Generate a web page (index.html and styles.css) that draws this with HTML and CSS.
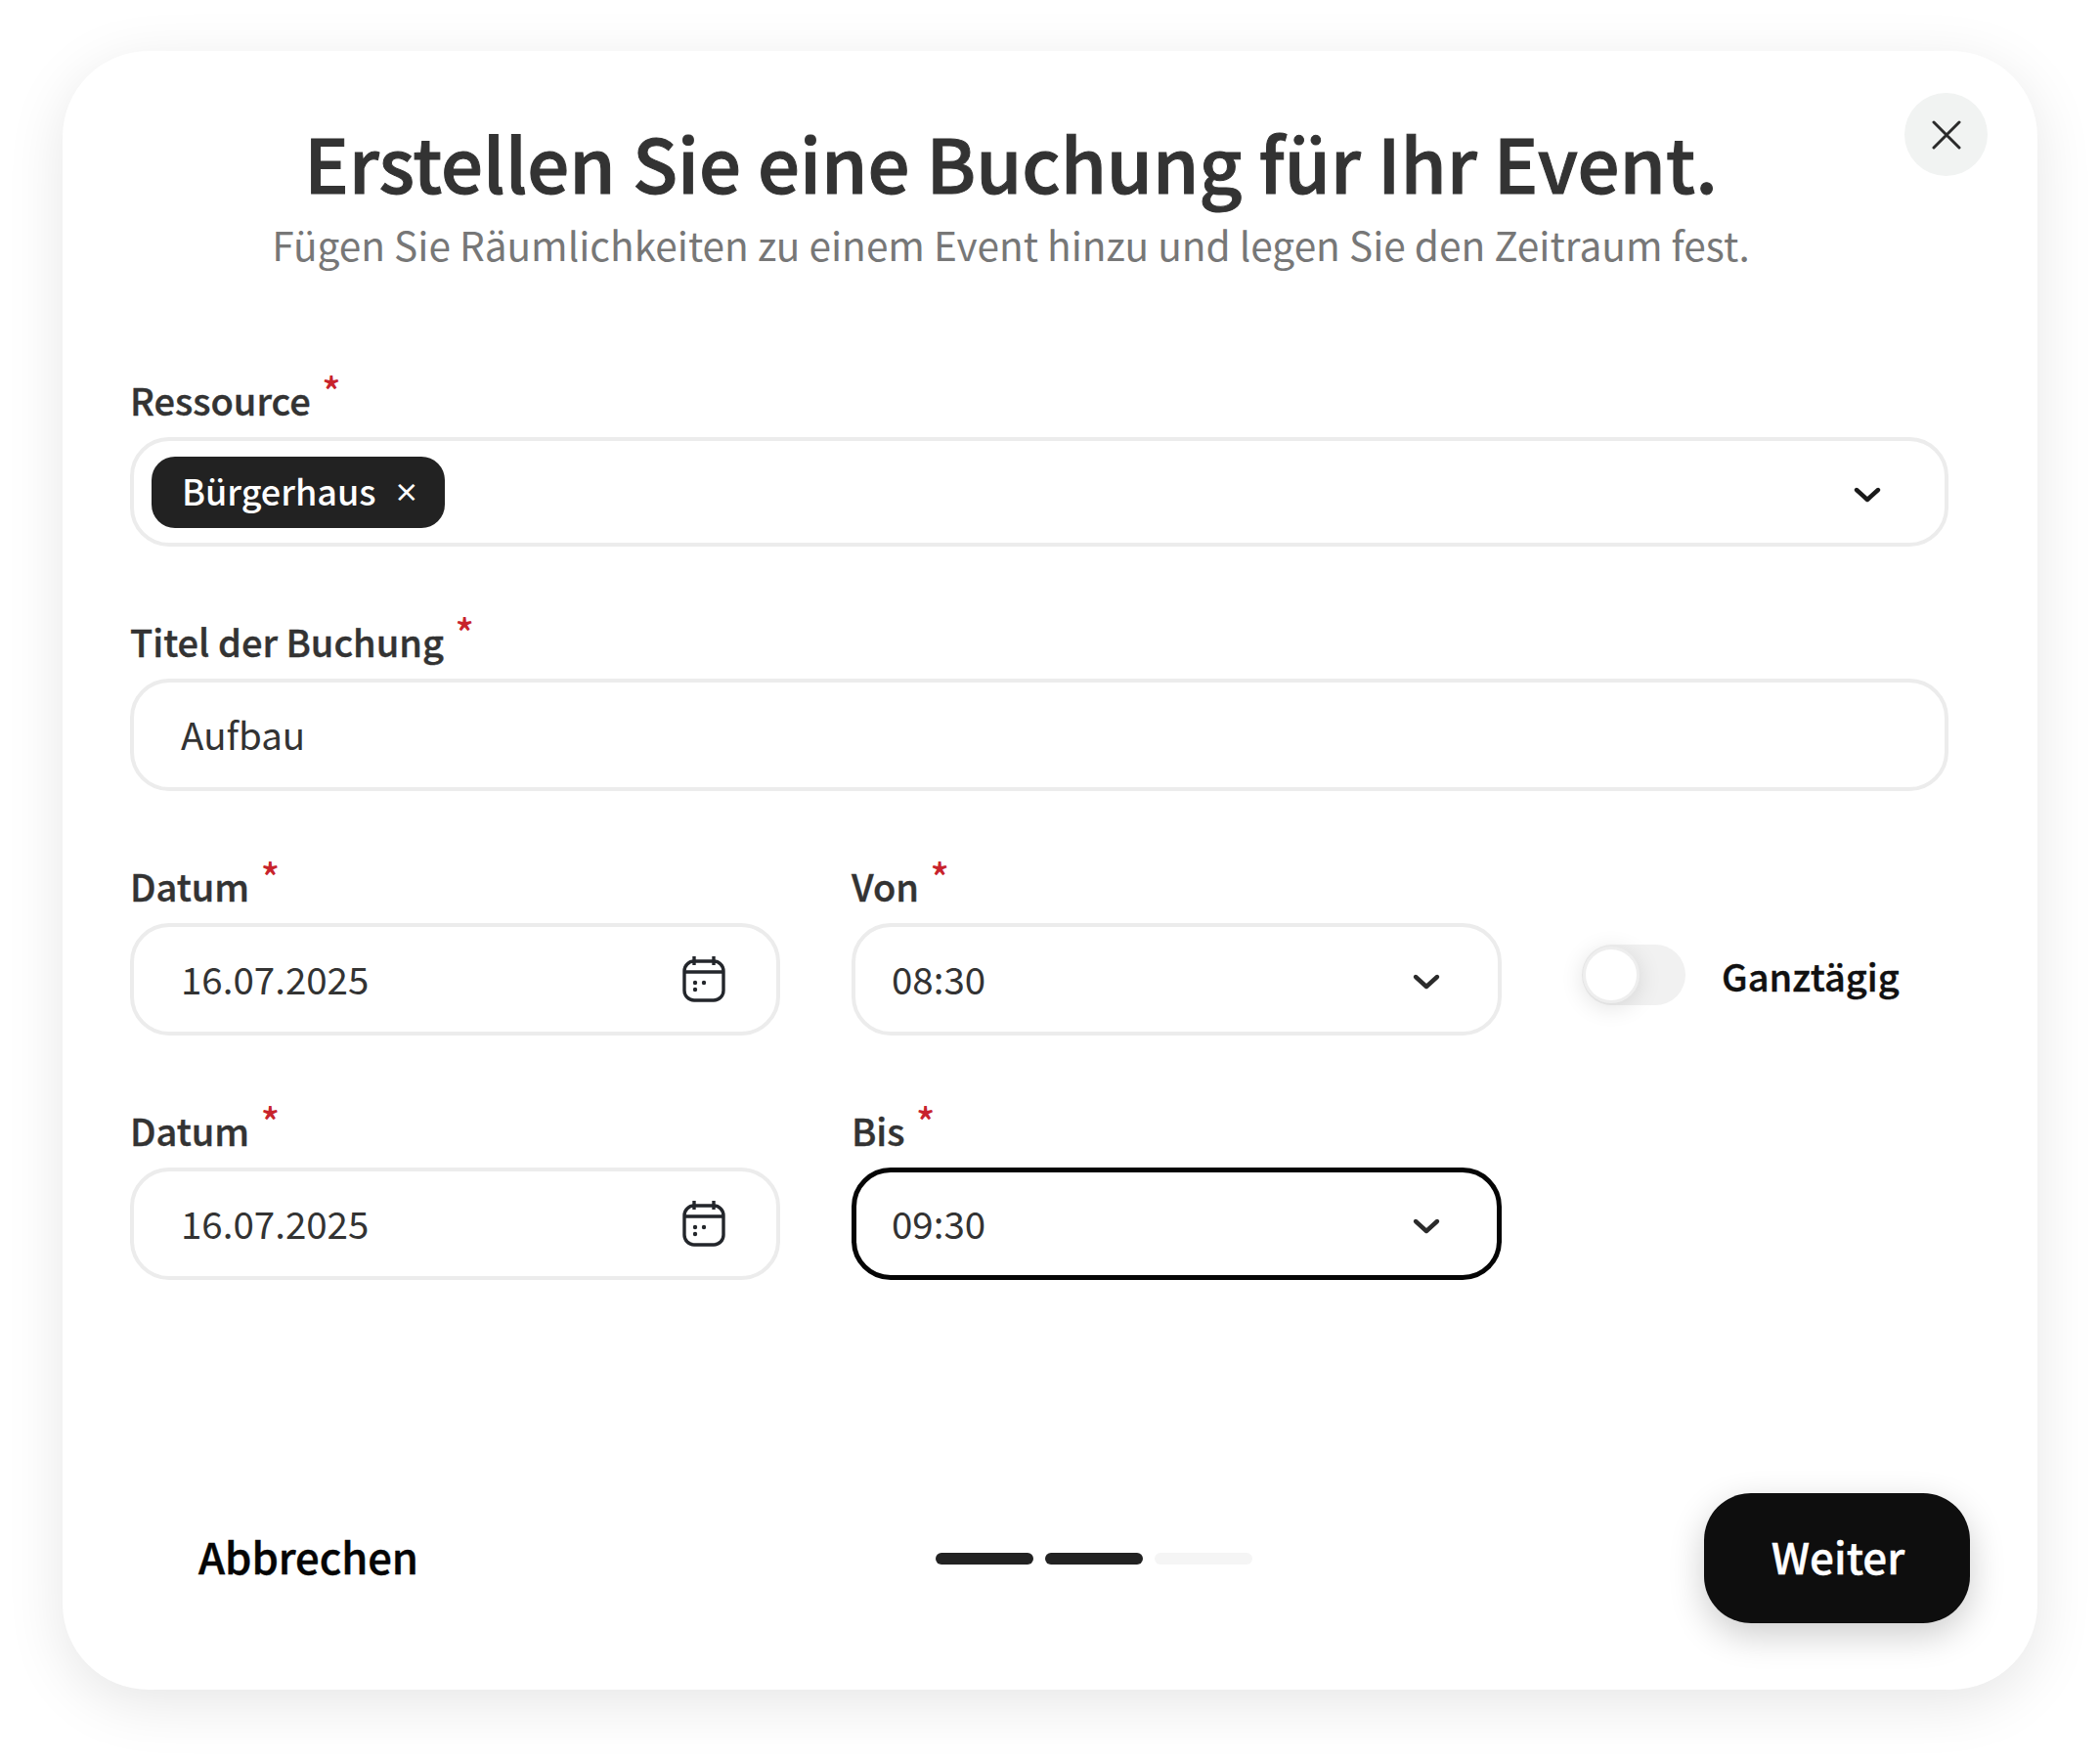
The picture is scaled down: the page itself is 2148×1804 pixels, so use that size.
FILE: index.html
```html
<!DOCTYPE html>
<html lang="de">
<head>
<meta charset="utf-8">
<title>Buchung erstellen</title>
<link rel="stylesheet" href="styles.css">
</head>
<body>
<main class="card">
  <button class="close" aria-label="Schließen">
    <svg width="30" height="30" viewBox="0 0 30 30" fill="none" stroke="#2b2b2b" stroke-width="3" stroke-linecap="round"><path d="M2 2 28 28M28 2 2 28"/></svg>
  </button>
  <header class="head">
    <h1 class="title">Erstellen Sie eine Buchung für Ihr Event.</h1>
    <p class="sub">Fügen Sie Räumlichkeiten zu einem Event hinzu und legen Sie den Zeitraum fest.</p>
  </header>
  <form class="form">
    <div class="field">
      <div class="label">Ressource <span class="req">*</span></div>
      <div class="control control-res">
        <span class="chip">Bürgerhaus<span class="chip-x">×</span></span>
        <svg class="chev" width="30" height="18" viewBox="0 0 30 18" fill="none" stroke="#1a1a1a" stroke-width="4.4" stroke-linecap="round" stroke-linejoin="round"><path d="M4 4 15 14 26 4"/></svg>
      </div>
    </div>
    <div class="field">
      <div class="label">Titel der Buchung <span class="req">*</span></div>
      <div class="control"><span class="value">Aufbau</span></div>
    </div>
    <div class="grid">
      <div class="field">
        <div class="label">Datum <span class="req">*</span></div>
        <div class="control control-date"><span class="value">16.07.2025</span>
          <svg class="cal" width="44" height="48" viewBox="0 0 44 48" fill="none" stroke="#23262b" stroke-width="3.4"><rect x="2" y="6" width="40" height="40" rx="10"/><path d="M2 17H42M12 1V10M32 1V10"/><g fill="#23262b" stroke="none"><circle cx="13" cy="28" r="2.2"/><circle cx="22" cy="28" r="2.2"/><circle cx="13" cy="35" r="2.2"/></g></svg>
        </div>
      </div>
      <div class="field">
        <div class="label">Von <span class="req">*</span></div>
        <div class="control control-time"><span class="value">08:30</span>
          <svg class="chev" width="30" height="18" viewBox="0 0 30 18" fill="none" stroke="#2b2b2b" stroke-width="4.4" stroke-linecap="round" stroke-linejoin="round"><path d="M4 4 15 14 26 4"/></svg>
        </div>
      </div>
      <div class="all-day">
        <span class="toggle"><span class="knob"></span></span>
        <span class="all-day-label">Ganztägig</span>
      </div>
      <div class="field">
        <div class="label">Datum <span class="req">*</span></div>
        <div class="control control-date"><span class="value">16.07.2025</span>
          <svg class="cal" width="44" height="48" viewBox="0 0 44 48" fill="none" stroke="#23262b" stroke-width="3.4"><rect x="2" y="6" width="40" height="40" rx="10"/><path d="M2 17H42M12 1V10M32 1V10"/><g fill="#23262b" stroke="none"><circle cx="13" cy="28" r="2.2"/><circle cx="22" cy="28" r="2.2"/><circle cx="13" cy="35" r="2.2"/></g></svg>
        </div>
      </div>
      <div class="field">
        <div class="label">Bis <span class="req">*</span></div>
        <div class="control control-time control-focus"><span class="value">09:30</span>
          <svg class="chev" width="30" height="18" viewBox="0 0 30 18" fill="none" stroke="#2b2b2b" stroke-width="4.4" stroke-linecap="round" stroke-linejoin="round"><path d="M4 4 15 14 26 4"/></svg>
        </div>
      </div>
    </div>
  </form>
  <footer class="foot">
    <button class="cancel">Abbrechen</button>
    <div class="steps"><span class="step step-on"></span><span class="step step-on"></span><span class="step"></span></div>
    <button class="next">Weiter</button>
  </footer>
</main>
</body>
</html>
```
FILE: styles.css
```css
* { box-sizing: border-box; }
html, body { margin: 0; background: #fff; }
body {
  width: 2148px;
  height: 1804px;
  padding: 52px 64px 0;
  font-family: "Noto Sans CJK SC", "Noto Sans", sans-serif;
  overflow: hidden;
}
.card {
  position: relative;
  width: 2020px;
  height: 1676px;
  padding: 63px 91px 0 69px;
  background: #fff;
  border-radius: 88px;
  box-shadow: 0 14px 60px rgba(0, 0, 0, .10);
  display: flex;
  flex-direction: column;
}
.close {
  position: absolute;
  top: 43px;
  right: 51px;
  width: 85px;
  height: 85px;
  border: 0;
  padding: 0;
  border-radius: 50%;
  background: #f1f3f2;
  display: flex;
  align-items: center;
  justify-content: center;
}
.head { padding-right: 58px; text-align: center; }
.title {
  margin: 0;
  font-size: 76px;
  line-height: 100px;
  font-weight: 500;
  -webkit-text-stroke: 1px #333;
  color: #333;
}
.sub {
  margin: 4px 0 0;
  font-size: 40.6px;
  line-height: 62px;
  font-weight: 400;
  color: #777;
}
.form { display: flex; flex-direction: column; gap: 67px; margin-top: 98px; }
.field { display: flex; flex-direction: column; gap: 8px; }
.label {
  font-size: 38px;
  line-height: 60px;
  font-weight: 500;
  -webkit-text-stroke: .4px #333;
  color: #333;
}
.req {
  color: #c8232c;
  -webkit-text-stroke: 0;
  font-size: 40px;
  vertical-align: 9px;
  line-height: 0;
  margin-left: 3px;
}
.control {
  height: 115px;
  border: 4px solid #ececec;
  border-radius: 40px;
  padding: 0 51px 0 48px;
  display: flex;
  align-items: center;
  justify-content: space-between;
  background: #fff;
}
.control-res { height: 112px; padding: 0 64px 0 18px; }
.control-date { padding-right: 52px; }
.control-time { padding: 0 58px 0 37px; }
.control-focus { border: 5px solid #050505; padding: 0 57px 0 36px; }
.chev { margin-top: 5px; }
.cal { margin-bottom: 2px; }
.value { font-size: 38.5px; line-height: 60px; margin-bottom: 3px; color: #333; }
.chip {
  width: 300px;
  height: 73px;
  padding: 0 0 4px 31px;
  border-radius: 24px;
  background: #222;
  color: #fff;
  font-size: 36px;
  font-weight: 500;
  display: flex;
  align-items: center;
}
.chip-x { font-size: 26px; font-weight: 700; margin-left: 18px; }
.grid {
  display: grid;
  grid-template-columns: 665px 665px 1fr;
  column-gap: 73px;
  row-gap: 67px;
}
.all-day {
  display: flex;
  align-items: center;
  padding: 59px 0 0 9px;
  gap: 37px;
}
.toggle {
  width: 106px;
  height: 62px;
  border-radius: 31px;
  background: #f1f1f1;
  display: flex;
  align-items: center;
  padding: 0 0 0 1px;
}
.knob {
  width: 58px;
  height: 58px;
  border: 3px solid #eee;
  border-radius: 50%;
  background: #fff;
  box-shadow: 0 4px 24px rgba(0, 0, 0, .12);
}
.all-day-label {
  font-size: 38px;
  font-weight: 500;
  -webkit-text-stroke: .4px #111;
  color: #111;
}
.foot {
  margin-top: auto;
  margin-bottom: 68px;
  display: flex;
  align-items: center;
  padding-left: 70px;
}
.cancel {
  border: 0;
  background: none;
  padding: 0 0 5px;
  font: inherit;
  font-size: 43.5px;
  font-weight: 500;
  -webkit-text-stroke: .5px #050505;
  color: #050505;
}
.steps { display: flex; gap: 12px; margin-left: 529px; }
.step { width: 100px; height: 12px; border-radius: 6px; background: #f5f5f5; }
.step-on { background: #222; }
.next {
  margin-left: auto;
  margin-right: -22px;
  width: 272px;
  height: 133px;
  border: 0;
  padding: 0 0 5px 2px;
  border-radius: 48px;
  background: #0e0e0e;
  color: #fff;
  font: inherit;
  font-size: 44px;
  font-weight: 500;
  -webkit-text-stroke: .4px #fff;
  box-shadow: 0 12px 36px rgba(0, 0, 0, .2);
}
```
